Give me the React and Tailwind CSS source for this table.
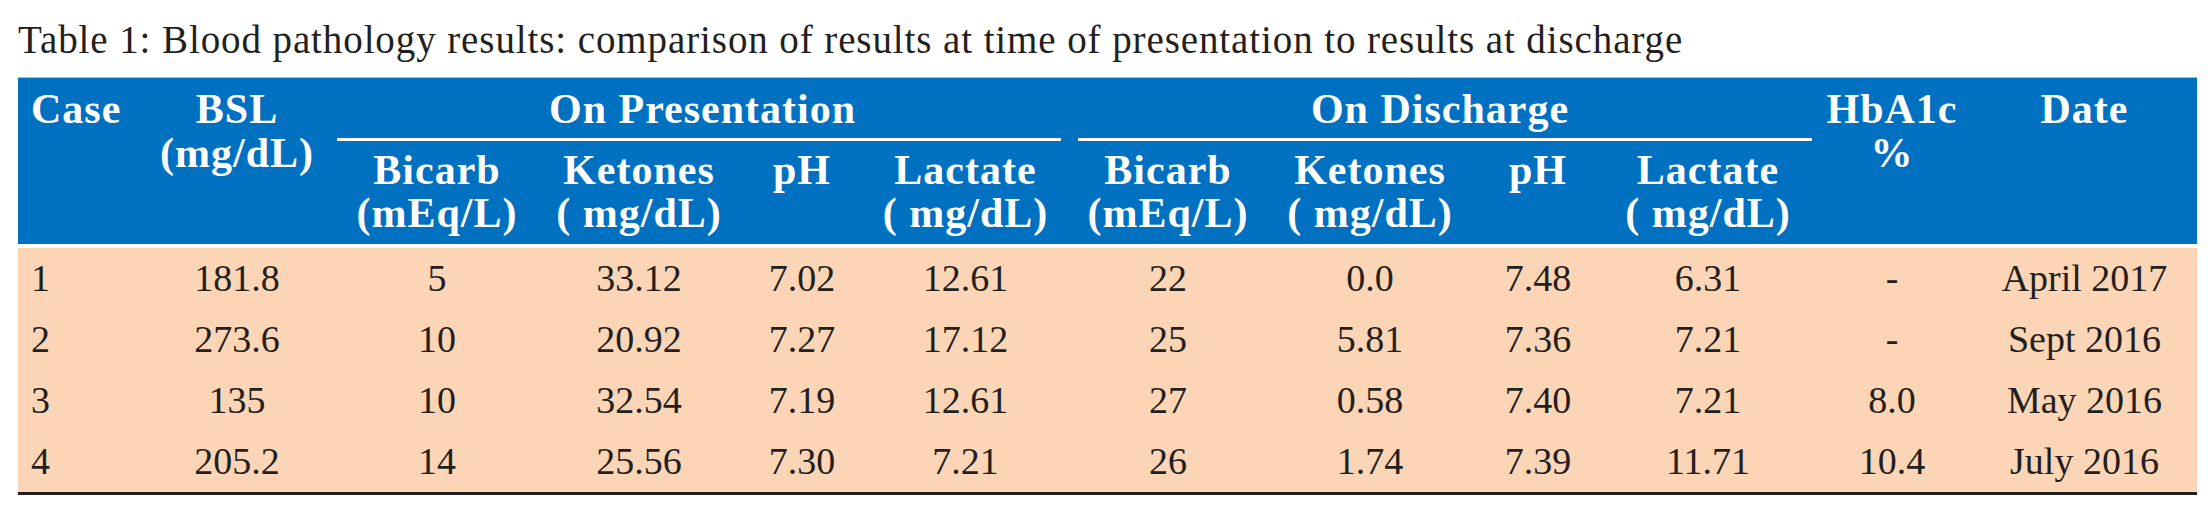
import React from 'react'

// column widths (px) — Case, BSL, then the two groups, HbA1c, Date
const presCols = [
  { w: 'w-[200px]', top: 'Bicarb', bottom: '(mEq/L)' },
  { w: 'w-[204px]', top: 'Ketones', bottom: '( mg/dL)' },
  { w: 'w-[122px]', top: 'pH', bottom: '' },
  { w: 'w-[205px]', top: 'Lactate', bottom: '( mg/dL)' },
]

const discCols = [
  { w: 'w-[200px]', top: 'Bicarb', bottom: '(mEq/L)' },
  { w: 'w-[204px]', top: 'Ketones', bottom: '( mg/dL)' },
  { w: 'w-[132px]', top: 'pH', bottom: '' },
  { w: 'w-[208px]', top: 'Lactate', bottom: '( mg/dL)' },
]

const widths = [
  'w-[119px] pl-[13px] text-left',
  'w-[200px] text-center',
  'w-[200px] text-center',
  'w-[204px] text-center',
  'w-[122px] text-center',
  'w-[205px] text-center',
  'w-[200px] text-center',
  'w-[204px] text-center',
  'w-[132px] text-center',
  'w-[208px] text-center',
  'w-[160px] text-center',
  'w-[225px] text-center',
]

const rows = [
  ['1', '181.8', '5', '33.12', '7.02', '12.61', '22', '0.0', '7.48', '6.31', '-', 'April 2017'],
  ['2', '273.6', '10', '20.92', '7.27', '17.12', '25', '5.81', '7.36', '7.21', '-', 'Sept 2016'],
  ['3', '135', '10', '32.54', '7.19', '12.61', '27', '0.58', '7.40', '7.21', '8.0', 'May 2016'],
  ['4', '205.2', '14', '25.56', '7.30', '7.21', '26', '1.74', '7.39', '11.71', '10.4', 'July 2016'],
]

function SubHead({ cols }) {
  return (
    <div className="flex pt-[8px] pb-[9px]">
      {cols.map((c, i) => (
        <div key={i} className={`${c.w} text-center leading-[43px]`}>
          <div>{c.top}</div>
          <div className="h-[43px]">{c.bottom}</div>
        </div>
      ))}
    </div>
  )
}

export default function App() {
  return (
    <div className="w-[2211px] h-[511px] bg-white font-['Liberation_Serif',serif] text-[#231f20]">
      <div className="pt-[16px] pl-[18px]">
        <h1 className="h-[48px] text-[39px] tracking-[0.9px] leading-[48px] whitespace-nowrap">
          Table 1: Blood pathology results: comparison of results at time of presentation to results at discharge
        </h1>
      </div>

      <div className="mt-[13px] ml-[18px] w-[2179px]">
        {/* header */}
        <div className="flex h-[167px] bg-[#0070c0] border-t border-[#8fc0e6] text-white font-bold text-[42px] tracking-[1px]">
          <div className="w-[119px] pl-[13px] pt-[9px] leading-[44px]">Case</div>
          <div className="w-[200px] pt-[9px] text-center leading-[44px]">
            <div>BSL</div>
            <div>(mg/dL)</div>
          </div>
          <div className="w-[731px] pt-[9px] flex flex-col">
            <div className="text-center leading-[44px]">On Presentation</div>
            <div className="mt-[7px] mr-[7px] h-[3px] bg-white" />
            <SubHead cols={presCols} />
          </div>
          <div className="w-[744px] pt-[9px] flex flex-col">
            <div className="text-center leading-[44px]">On Discharge</div>
            <div className="mt-[7px] ml-[10px] h-[3px] bg-white" />
            <SubHead cols={discCols} />
          </div>
          <div className="w-[160px] pt-[9px] text-center leading-[44px]">
            <div>HbA1c</div>
            <div>%</div>
          </div>
          <div className="w-[225px] pt-[9px] text-center leading-[44px]">Date</div>
        </div>

        {/* body */}
        <div className="mt-[4px] bg-[#fbd5b5] border-b-[3px] border-[#231f20] text-[38px]">
          {rows.map((r, i) => (
            <div key={i} className="flex h-[61px] leading-[61px]">
              {r.map((v, j) => (
                <div key={j} className={widths[j]}>{v}</div>
              ))}
            </div>
          ))}
        </div>
      </div>
    </div>
  )
}
